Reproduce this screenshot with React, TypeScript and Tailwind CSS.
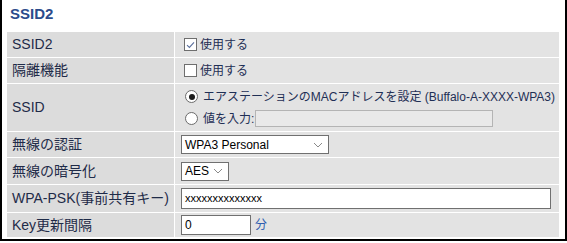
import React from 'react';

const Check = ({ checked }: { checked?: boolean }) => (
  <span className="inline-flex h-[13px] w-[13px] shrink-0 items-center justify-center border border-[#6e6e6e] bg-white">
    {checked && (
      <svg width="9" height="8" viewBox="0 0 9 8">
        <path d="M1 4.2 L3.4 6.4 L8 1.4" fill="none" stroke="#5a6f9c" strokeWidth="1.1" />
      </svg>
    )}
  </span>
);

const Radio = ({ checked }: { checked?: boolean }) => (
  <span className="inline-flex h-[13px] w-[13px] shrink-0 items-center justify-center rounded-full border border-[#6b6b6b] bg-white">
    {checked && <span className="h-[6px] w-[6px] rounded-full bg-[#1a1a1a]" />}
  </span>
);

const Chevron = () => (
  <svg width="10" height="6" viewBox="0 0 10 6" className="shrink-0">
    <path d="M1 1 L5 5 L9 1" fill="none" stroke="#8a8a8a" strokeWidth="1" />
  </svg>
);

const Label: React.FC<{ h: string; children: React.ReactNode }> = ({ h, children }) => (
  <div className={`${h} flex items-center bg-[#dcdcdc] pl-[5px] text-[14px] text-[#1f2b48]`}>{children}</div>
);

const Value: React.FC<{ h: string; children: React.ReactNode }> = ({ h, children }) => (
  <div className={`${h} flex items-center bg-[#e3e3e3] pl-[6px] text-[12px] text-[#1f2f55]`}>{children}</div>
);

export default function App() {
  return (
    <div className="h-[241px] w-[567px] border-x-2 border-b-2 border-black bg-white font-['Liberation_Sans','Noto_Sans_CJK_JP',sans-serif]">
      <div className="h-[32px] pl-[8px] pt-[5px] text-[15px] font-bold leading-[17px] text-[#2b4c8c]">SSID2</div>
      <div className="ml-[5px] mr-[6px] grid grid-cols-[167px_1fr] gap-px bg-white">
        <Label h="h-[25px]">SSID2</Label>
        <Value h="h-[25px]">
          <span className="ml-[3px] flex items-center gap-[3px]">
            <Check checked />
            <span>使用する</span>
          </span>
        </Value>

        <Label h="h-[25px]">隔離機能</Label>
        <Value h="h-[25px]">
          <span className="ml-[3px] flex items-center gap-[3px]">
            <Check />
            <span>使用する</span>
          </span>
        </Value>

        <Label h="h-[47px]">SSID</Label>
        <div className="flex h-[47px] flex-col justify-center gap-[4px] bg-[#e3e3e3] pl-[10px] text-[12px] text-[#1f2f55]">
          <div className="flex items-center gap-[5px]">
            <Radio checked />
            <span>エアステーションのMACアドレスを設定 (Buffalo-A-XXXX-WPA3)</span>
          </div>
          <div className="flex items-center gap-[5px]">
            <Radio />
            <span>値を入力:</span>
            <span className="-ml-[4px] h-[17px] w-[238px] border border-[#b4b4b4] bg-[#e9e9e9]" />
          </div>
        </div>

        <Label h="h-[25px]">無線の認証</Label>
        <Value h="h-[25px]">
          <span className="flex h-[19px] w-[148px] items-center justify-between border border-[#707070] bg-white pl-[3px] pr-[5px] text-black">
            <span>WPA3 Personal</span>
            <Chevron />
          </span>
        </Value>

        <Label h="h-[26px]">無線の暗号化</Label>
        <Value h="h-[26px]">
          <span className="flex h-[19px] w-[48px] items-center justify-between border border-[#707070] bg-white pl-[3px] pr-[5px] text-black">
            <span>AES</span>
            <Chevron />
          </span>
        </Value>

        <Label h="h-[27px]">WPA-PSK(事前共有キー)</Label>
        <Value h="h-[27px]">
          <span className="flex h-[21px] w-[370px] items-center border border-[#707070] bg-white pl-[3px] text-[11px] text-black">
            xxxxxxxxxxxxxx
          </span>
        </Value>

        <Label h="h-[24px]">Key更新間隔</Label>
        <Value h="h-[24px]">
          <span className="flex h-[20px] w-[70px] items-center border border-[#707070] bg-white pl-[3px] text-black">0</span>
          <span className="ml-[4px] text-[#2f5db0]">分</span>
        </Value>
      </div>
    </div>
  );
}
